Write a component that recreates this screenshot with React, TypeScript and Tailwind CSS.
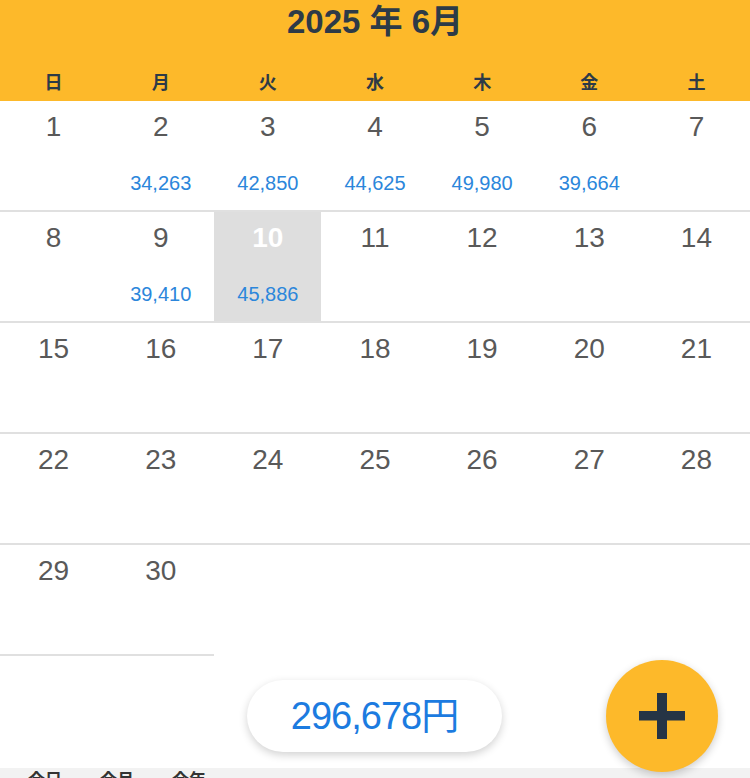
const font = { fontFamily: '"Liberation Sans", "Noto Sans CJK JP", sans-serif' };

const weekdays = ['日', '月', '火', '水', '木', '金', '土'];

// June 2025 spending per day
const amounts: Record<number, string> = {
  2: '34,263',
  3: '42,850',
  4: '44,625',
  5: '49,980',
  6: '39,664',
  9: '39,410',
  10: '45,886',
};

const today = 10;

function DayCell({ day }: { day: number }) {
  const selected = day === today;
  const amount = amounts[day];
  return (
    <div
      className={`h-[111px] border-b-2 border-[#e0e0e0] flex flex-col items-center ${
        selected ? 'bg-[#dedede]' : 'bg-white'
      }`}
    >
      <span
        className={`mt-[11px] text-[28px] leading-[30px] ${
          selected ? 'text-white font-bold' : 'text-[#595959]'
        }`}
      >
        {day}
      </span>
      {amount && <span className="mt-[30px] text-[20px] leading-[22px] text-[#2b86db]">{amount}</span>}
    </div>
  );
}

export default function App() {
  const days = Array.from({ length: 30 }, (_, i) => i + 1);
  return (
    <div className="relative w-[750px] h-[778px] overflow-hidden bg-white" style={font}>
      <div className="bg-[#fdb92a] h-[101px] flex flex-col">
        <h1 className="h-[44px] flex items-center justify-center text-[33px] font-bold text-[#2d3a47]">
          2025 年 6月
        </h1>
        <div className="grid grid-cols-7 mt-[29px]">
          {weekdays.map((w) => (
            <span key={w} className="text-center text-[18px] leading-[20px] font-bold text-[#2d3a47]">
              {w}
            </span>
          ))}
        </div>
      </div>

      <div className="grid grid-cols-7">
        {days.map((d) => (
          <DayCell key={d} day={d} />
        ))}
      </div>

      <div className="absolute left-0 right-0 top-[768px] h-[10px] overflow-hidden bg-[#f2f2f2] pl-[28px] pt-[3px] flex gap-[38px] text-[17px] leading-[20px] font-bold text-[#333]">
        <span>今日</span>
        <span>今月</span>
        <span>今年</span>
      </div>

      <div className="absolute left-[247px] top-[680px] w-[255px] h-[72px] rounded-full bg-white shadow-[0_3px_8px_rgba(0,0,0,0.18)] flex items-center justify-center">
        <span className="text-[38px] text-[#1c7be0] tracking-[-1px]">296,678円</span>
      </div>

      <button
        type="button"
        className="absolute left-[606px] top-[660px] w-[112px] h-[112px] rounded-full bg-[#fdb92a] shadow-[0_3px_8px_rgba(0,0,0,0.2)] flex items-center justify-center"
      >
        <svg width="46" height="46" viewBox="0 0 46 46">
          <rect x="0" y="18" width="46" height="9.5" fill="#263445" />
          <rect x="18" y="0" width="10" height="46" fill="#263445" />
        </svg>
      </button>
    </div>
  );
}
